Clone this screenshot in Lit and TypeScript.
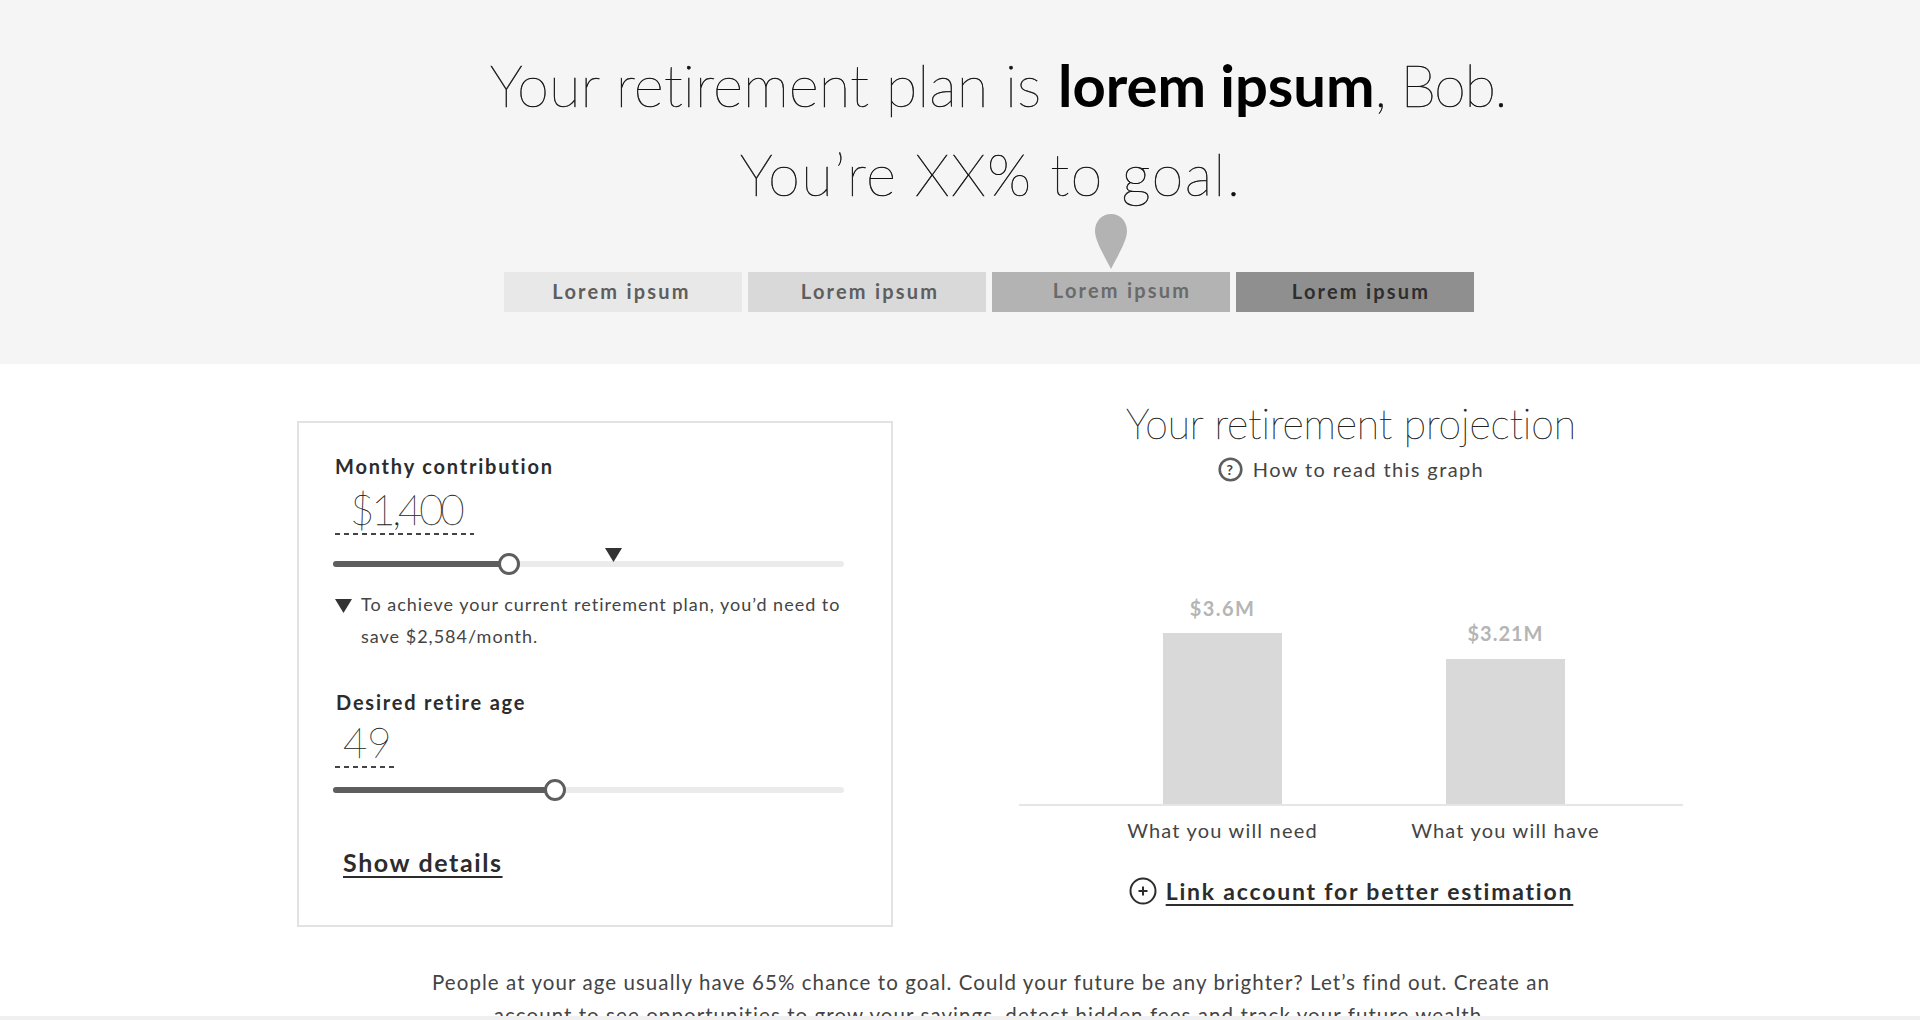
import { LitElement, html, css } from "lit";
import { customElement } from "lit/decorators.js";

const tiers = [
  { bg: "#e8e8e8", fg: "#5e5e5e", pad: "0 3px 2px 0" },
  { bg: "#d9d9d9", fg: "#5e5e5e", pad: "0 0 2px 6px" },
  { bg: "#b3b3b3", fg: "#6a6a6a", pad: "0 0 5px 22px" },
  { bg: "#8f8f8f", fg: "#2e2e2e", pad: "0 0 2px 12px" },
];

@customElement("app-root")
export class AppRoot extends LitElement {
  static styles = css`
    :host { display: flex; flex-direction: column; width: 1920px; height: 1020px; overflow: hidden; background: #fff; color: #333; font-family: "Lato", "Noto Sans", sans-serif; }
    .scroll { flex: 1; min-height: 0; overflow: hidden; }
    .edge { height: 4px; background: #f0f0f0; }
    .hero { height: 364px; box-sizing: border-box; background: #f5f5f5; padding: 40px 0 0 58px; display: flex; flex-direction: column; align-items: center; }
    h1 { margin: 0; font-weight: 100; font-size: 58px; line-height: 89px; color: #111; -webkit-text-stroke: 0.5px #111; text-align: center; white-space: nowrap; }
    h1 .first { display: block; padding-left: 18px; letter-spacing: 0.05px; }
    h1 .tail { letter-spacing: -1.6px; }
    h1 .second { display: block; padding-left: 3px; letter-spacing: 1.25px; }
    h1 b { font-weight: 700; color: #000; -webkit-text-stroke: 0; letter-spacing: 0; }
    .tiers { display: flex; gap: 6px; margin-top: 54px; position: relative; }
    .tier { width: 238px; height: 40px; display: flex; align-items: center; justify-content: center; box-sizing: border-box; font-size: 20px; font-weight: 700; letter-spacing: 2.2px; white-space: nowrap; }
    .pin { position: absolute; left: 590px; top: -58px; }
    .main { display: flex; padding: 57px 0 0 297px; }
    .card { width: 596px; height: 506px; box-sizing: border-box; border: 2px solid #e2e2e2; padding: 29px 0 0 36px; }
    .label { font-size: 20px; font-weight: 700; letter-spacing: 1.8px; line-height: 28px; color: #2c2c2c; white-space: nowrap; }
    .val { font-weight: 100; font-size: 42px; line-height: 50px; color: #222; -webkit-text-stroke: 0.3px #222; padding: 0 0 1px 15px; margin-top: 4px; box-sizing: border-box; background: repeating-linear-gradient(90deg, #444 0 5px, transparent 5px 9px) bottom left / 100% 2px no-repeat; }
    .val.money { width: 139px; letter-spacing: -3.2px; }
    .val.age { width: 61px; padding-left: 8px; margin-top: 1px; }
    .slider { position: relative; width: 511px; height: 6px; margin-left: -2px; background: #ebebeb; border-radius: 3px; margin-top: 26px; }
    .slider.tight { margin-top: 19px; }
    .fill { height: 6px; background: #5e5e5e; border-radius: 3px; }
    .knob { position: absolute; top: -8px; width: 22px; height: 22px; margin-left: -11px; box-sizing: border-box; background: #fff; border: 3px solid #5e5e5e; border-radius: 50%; }
    .mark { position: absolute; top: -13px; left: 272px; }
    .note { display: flex; gap: 9px; margin-top: 21px; font-size: 18px; line-height: 32px; letter-spacing: 1px; color: #444; width: 512px; }
    .note svg { flex: none; margin-top: 11px; }
    .age-label { margin: 36px 0 0 1px; }
    .show { display: inline-block; margin: 54px 0 0 8px; font-size: 25px; font-weight: 700; letter-spacing: 1.6px; color: #2c2c2c; text-decoration: underline; text-underline-offset: 4px; }
    .proj { margin-left: 126px; width: 664px; display: flex; flex-direction: column; align-items: center; }
    h2 { margin: -22px 0 0; font-weight: 100; font-size: 41px; line-height: 50px; color: #222; -webkit-text-stroke: 0.4px #222; letter-spacing: -0.1px; }
    .how { display: flex; align-items: center; gap: 10px; font-size: 20px; letter-spacing: 1.4px; line-height: 30px; color: #444; margin-top: 5px; }
    .chart { width: 664px; height: 313px; border-bottom: 2px solid #e6e6e6; display: flex; box-sizing: border-box; align-items: flex-end; padding-left: 144px; gap: 164px; margin-top: 9px; flex: none; }
    .col { display: flex; flex-direction: column; align-items: center; width: 119px; }
    .amt { font-size: 20px; font-weight: 700; letter-spacing: 1.4px; color: #b5b5b5; line-height: 24px; margin-bottom: 13px; white-space: nowrap; }
    .amt.low { margin-bottom: 14px; letter-spacing: 1px; }
    .bar { width: 119px; background: #d9d9d9; }
    .bar.need { height: 171px; }
    .bar.have { height: 145px; }
    .names { display: flex; width: 664px; padding-left: 144px; gap: 164px; box-sizing: border-box; margin-top: 9px; }
    .names span { width: 119px; display: flex; justify-content: center; white-space: nowrap; font-size: 20px; letter-spacing: 1.2px; line-height: 30px; color: #444; }
    .link { display: flex; align-items: center; gap: 9px; margin-top: 30px; font-size: 23px; font-weight: 700; letter-spacing: 1.8px; line-height: 32px; color: #2c2c2c; white-space: nowrap; }
    .link u { text-underline-offset: 4px; }
    .foot { width: 1140px; margin: 39px 0 0 421px; text-align: center; font-size: 20.5px; line-height: 33px; letter-spacing: 1.07px; color: #444; }
  `;

  private slider(pct: number, mark: boolean, tight: boolean) {
    return html`<div class="slider ${tight ? "tight" : ""}">
      <div class="fill" style="width:${pct}%"></div>
      <div class="knob" style="left:${pct}%"></div>
      ${mark ? html`<svg class="mark" width="17" height="14" viewBox="0 0 17 14"><path d="M0 0H17L8.5 14Z" fill="#333"/></svg>` : ""}
    </div>`;
  }

  render() {
    return html`
      <div class="scroll">
        <section class="hero">
          <h1><span class="first">Your retirement plan is <b>lorem ipsum</b><span class="tail">, Bob.</span></span><span class="second">You’re XX% to goal.</span></h1>
          <div class="tiers">
            ${tiers.map((t) => html`<div class="tier" style="background:${t.bg};color:${t.fg};padding:${t.pad}">Lorem ipsum</div>`)}
            <svg class="pin" width="34" height="55" viewBox="0 0 34 55"><path d="M17 0C8 0 1 7 1 17C1 27 11 43 17 55C23 43 33 27 33 17C33 7 26 0 17 0Z" fill="#b3b3b3"/></svg>
          </div>
        </section>
        <section class="main">
          <div class="card">
            <div class="label">Monthy contribution</div>
            <div class="val money">$1,400</div>
            ${this.slider(34.4, true, false)}
            <div class="note">
              <svg width="17" height="14" viewBox="0 0 17 14"><path d="M0 0H17L8.5 14Z" fill="#333"/></svg>
              <span>To achieve your current retirement plan, you’d need to save $2,584/month.</span>
            </div>
            <div class="label age-label">Desired retire age</div>
            <div class="val age">49</div>
            ${this.slider(43.5, false, true)}
            <a class="show">Show details</a>
          </div>
          <div class="proj">
            <h2>Your retirement projection</h2>
            <div class="how">
              <svg width="25" height="25" viewBox="0 0 25 25"><circle cx="12.5" cy="12.5" r="10.8" fill="none" stroke="#5e5e5e" stroke-width="2.6"/><text x="12.5" y="18" text-anchor="middle" font-size="14" font-weight="700" fill="#444">?</text></svg>
              How to read this graph
            </div>
            <div class="chart">
              <div class="col"><span class="amt">$3.6M</span><div class="bar need"></div></div>
              <div class="col"><span class="amt low">$3.21M</span><div class="bar have"></div></div>
            </div>
            <div class="names"><span>What you will need</span><span>What you will have</span></div>
            <div class="link">
              <svg width="28" height="28" viewBox="0 0 28 28"><circle cx="14" cy="14" r="12.5" fill="none" stroke="#2c2c2c" stroke-width="2"/><path d="M14 9.5V18.5M9.5 14H18.5" stroke="#2c2c2c" stroke-width="2"/></svg>
              <u>Link account for better estimation</u>
            </div>
          </div>
        </section>
        <p class="foot">People at your age usually have 65% chance to goal. Could your future be any brighter? Let’s find out. Create an account to see opportunities to grow your savings, detect hidden fees and track your future wealth.</p>
      </div>
      <div class="edge"></div>
    `;
  }
}
